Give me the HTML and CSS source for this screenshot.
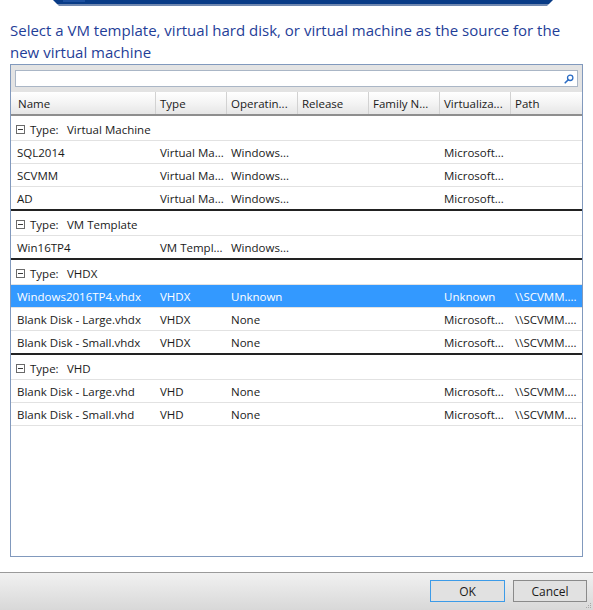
FILE: index.html
```html
<!DOCTYPE html>
<html>
<head>
<meta charset="utf-8">
<link rel="stylesheet" href="styles.css">
</head>
<body>
<div class="page">
  <div class="banner"><div class="banner-mark"></div></div>
  <div class="heading">Select a VM template, virtual hard disk, or virtual machine as the source for the new virtual machine</div>
  <div class="listbox">
    <div class="search-strip">
      <div class="search-box">
        <svg class="search-icon" width="10" height="10" viewBox="0 0 10 10"><circle cx="6.2" cy="3.8" r="2.7" fill="none" stroke="#2b6cc4" stroke-width="1.3"/><line x1="4.3" y1="5.7" x2="1.2" y2="8.8" stroke="#2b6cc4" stroke-width="1.6" stroke-linecap="round"/></svg>
      </div>
    </div>
    <div class="grid header">
      <div class="hcell first">Name</div>
      <div class="hcell">Type</div>
      <div class="hcell">Operatin...</div>
      <div class="hcell">Release</div>
      <div class="hcell">Family N...</div>
      <div class="hcell">Virtualiza...</div>
      <div class="hcell">Path</div>
    </div>

    <div class="group-row"><span class="toggle"></span><span class="glabel">Type:</span><span>Virtual Machine</span></div>
    <div class="grid row"><div class="cell first">SQL2014</div><div class="cell">Virtual Ma...</div><div class="cell">Windows...</div><div class="cell"></div><div class="cell"></div><div class="cell">Microsoft...</div><div class="cell"></div></div>
    <div class="grid row"><div class="cell first">SCVMM</div><div class="cell">Virtual Ma...</div><div class="cell">Windows...</div><div class="cell"></div><div class="cell"></div><div class="cell">Microsoft...</div><div class="cell"></div></div>
    <div class="grid row last"><div class="cell first">AD</div><div class="cell">Virtual Ma...</div><div class="cell">Windows...</div><div class="cell"></div><div class="cell"></div><div class="cell">Microsoft...</div><div class="cell"></div></div>

    <div class="group-row"><span class="toggle"></span><span class="glabel">Type:</span><span>VM Template</span></div>
    <div class="grid row last"><div class="cell first">Win16TP4</div><div class="cell">VM Templ...</div><div class="cell">Windows...</div><div class="cell"></div><div class="cell"></div><div class="cell"></div><div class="cell"></div></div>

    <div class="group-row"><span class="toggle"></span><span class="glabel">Type:</span><span>VHDX</span></div>
    <div class="grid row selected"><div class="cell first">Windows2016TP4.vhdx</div><div class="cell">VHDX</div><div class="cell">Unknown</div><div class="cell"></div><div class="cell"></div><div class="cell">Unknown</div><div class="cell">\\SCVMM....</div></div>
    <div class="grid row"><div class="cell first">Blank Disk - Large.vhdx</div><div class="cell">VHDX</div><div class="cell">None</div><div class="cell"></div><div class="cell"></div><div class="cell">Microsoft...</div><div class="cell">\\SCVMM....</div></div>
    <div class="grid row last"><div class="cell first">Blank Disk - Small.vhdx</div><div class="cell">VHDX</div><div class="cell">None</div><div class="cell"></div><div class="cell"></div><div class="cell">Microsoft...</div><div class="cell">\\SCVMM....</div></div>

    <div class="group-row"><span class="toggle"></span><span class="glabel">Type:</span><span>VHD</span></div>
    <div class="grid row"><div class="cell first">Blank Disk - Large.vhd</div><div class="cell">VHD</div><div class="cell">None</div><div class="cell"></div><div class="cell"></div><div class="cell">Microsoft...</div><div class="cell">\\SCVMM....</div></div>
    <div class="grid row"><div class="cell first">Blank Disk - Small.vhd</div><div class="cell">VHD</div><div class="cell">None</div><div class="cell"></div><div class="cell"></div><div class="cell">Microsoft...</div><div class="cell">\\SCVMM....</div></div>
  </div>
  <div class="footer">
    <button class="btn ok">OK</button>
    <button class="btn cancel">Cancel</button>
    <svg class="grip" width="6" height="6" viewBox="0 0 6 6"><rect x="4" y="0" width="1" height="1" fill="#a8a8a8"/><rect x="2" y="2" width="1" height="1" fill="#a8a8a8"/><rect x="4" y="2" width="1" height="1" fill="#a8a8a8"/><rect x="0" y="4" width="1" height="1" fill="#a8a8a8"/><rect x="2" y="4" width="1" height="1" fill="#a8a8a8"/><rect x="4" y="4" width="1" height="1" fill="#a8a8a8"/></svg>
  </div>
</div>
</body>
</html>
```

FILE: styles.css
```css
html, body {
  margin: 0;
  padding: 0;
  background: #ffffff;
}
.page {
  width: 593px;
  height: 610px;
  overflow: hidden;
  display: flex;
  flex-direction: column;
  font-family: "Open Sans", "Noto Sans", sans-serif;
  font-size: 11.5px;
  color: #1a1a1a;
}
.banner {
  margin-left: 53px;
  width: 500px;
  height: 6px;
  flex: none;
  background: linear-gradient(#083b86 0, #083b86 4px, #7088b0 4px, #7088b0 6px);
  clip-path: polygon(0 0, 100% 0, calc(100% - 6px) 100%, 6px 100%);
}
.banner-mark {
  margin-left: 10px;
  width: 22px;
  height: 2px;
  background: #1c4f9e;
}
.heading {
  margin-top: 13px;
  padding-left: 10px;
  width: 565px;
  font-size: 15px;
  line-height: 22px;
  color: #1f3e98;
  flex: none;
}
.listbox {
  margin-top: 1px;
  margin-left: 10px;
  width: 573px;
  height: 493px;
  box-sizing: border-box;
  border: 1px solid #8199bd;
  flex: none;
  display: flex;
  flex-direction: column;
}
.search-strip {
  background: #e3e3e3;
  padding: 5px 4px 5px 4px;
}
.search-box {
  height: 17px;
  box-sizing: border-box;
  background: #ffffff;
  border: 1px solid #aab6c6;
  display: flex;
  align-items: center;
  justify-content: flex-end;
  padding-right: 3px;
}
.search-icon {
  display: block;
}
.grid {
  display: grid;
  grid-template-columns: 144px 71px 71px 71px 71px 71px 71px;
}
.header {
  height: 24px;
  box-sizing: border-box;
  background: linear-gradient(#ffffff, #f4f4f4 50%, #e6e6e6);
  border-bottom: 2px solid #8e8e8e;
}
.hcell {
  padding-top: 1px;
  line-height: 21px;
  padding-left: 4px;
  border-left: 1px solid #d2d2d2;
  white-space: nowrap;
  overflow: hidden;
}
.hcell.first {
  border-left: none;
  padding-left: 7px;
}
.group-row {
  height: 25px;
  box-sizing: border-box;
  padding-top: 3px;
  line-height: 21px;
  border-bottom: 1px solid #e2e2e2;
  display: flex;
  align-items: center;
  padding-left: 5px;
}
.toggle {
  width: 9px;
  height: 9px;
  box-sizing: border-box;
  border: 1px solid #6a6a6a;
  margin-right: 5px;
  display: flex;
  align-items: center;
  justify-content: center;
}
.toggle::before {
  content: "";
  width: 5px;
  height: 1px;
  background: #3a3a3a;
}
.glabel {
  width: 37px;
}
.row {
  height: 23px;
  box-sizing: border-box;
  border-bottom: 1px solid #e2e2e2;
}
.row.last {
  height: 24px;
  border-bottom: 2px solid #222222;
}
.row.selected {
  background: #3399ff;
  color: #ffffff;
}
.cell {
  padding-top: 1px;
  line-height: 21px;
  padding-left: 5px;
  white-space: nowrap;
  overflow: hidden;
}
.cell.first {
  padding-left: 6px;
}
.footer {
  position: relative;
  margin-top: 15px;
  flex: 1;
  border-top: 1px solid #9a9a9a;
  background: linear-gradient(#f1f1f1, #d8d8d8);
  display: flex;
  justify-content: flex-end;
  align-items: flex-start;
  padding: 7px 6px 0 0;
  gap: 8px;
}
.btn {
  height: 22px;
  box-sizing: border-box;
  background: #e1e1e1;
  font-family: "Open Sans", "Noto Sans", sans-serif;
  font-size: 12px;
  color: #1a1a1a;
  padding: 0;
  margin: 0;
}
.btn.ok {
  width: 75px;
  border: 1px solid #3c9be8;
}
.btn.cancel {
  width: 74px;
  border: 1px solid #8a8a8a;
}
.grip {
  position: absolute;
  right: 1px;
  bottom: 1px;
}
```
